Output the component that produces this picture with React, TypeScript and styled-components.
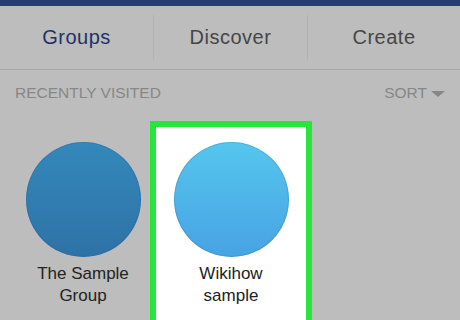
import React from 'react';
import styled, { createGlobalStyle } from 'styled-components';

const GlobalStyle = createGlobalStyle`
  html, body {
    margin: 0;
    padding: 0;
    background: #bdbdbd;
  }
  body {
    font-family: 'Liberation Sans', Arial, sans-serif;
  }
`;

const Screen = styled.div`
  width: 460px;
  height: 320px;
  overflow: hidden;
  background: #bdbdbd;
  display: flex;
  flex-direction: column;

  & > * {
    flex-shrink: 0;
  }
`;

const TopBar = styled.div`
  height: 6px;
  background: #263e70;
`;

const Tabs = styled.div`
  height: 63px;
  display: grid;
  grid-template-columns: 153px 154px 153px;
  align-items: center;
  border-bottom: 1px solid #a9a9a9;
`;

const Tab = styled.div<{ $active?: boolean; $divider?: boolean }>`
  height: 45px;
  display: flex;
  align-items: center;
  justify-content: center;
  font-size: 20px;
  letter-spacing: 0.5px;
  color: ${p => (p.$active ? '#1f3266' : '#464646')};
  border-left: ${p => (p.$divider ? '1px solid #b2b2b2' : 'none')};
`;

const SectionHeader = styled.div`
  height: 46px;
  display: flex;
  align-items: center;
  justify-content: space-between;
  padding: 0 15px 0 15px;
  color: #878787;
  font-size: 15.5px;
`;

const Sort = styled.div`
  display: flex;
  align-items: center;
  gap: 4px;
`;

const Caret = styled.span`
  width: 0;
  height: 0;
  border-left: 7px solid transparent;
  border-right: 7px solid transparent;
  border-top: 6px solid #878787;
  margin-top: 1px;
`;

const Groups = styled.div`
  display: flex;
  padding: 12px 0 0 9px;
`;

const Card = styled.div<{ $highlight?: boolean }>`
  width: 148px;
  height: 200px;
  display: flex;
  flex-direction: column;
  align-items: center;
  padding-top: 14px;
  box-sizing: border-box;
  background: ${p => (p.$highlight ? '#ffffff' : 'transparent')};
  box-shadow: ${p =>
    p.$highlight ? '0 0 0 1px #ffffff, 0 0 0 7px #26e63c' : 'none'};
`;

const Avatar = styled.div<{ $top: string; $bottom: string }>`
  width: 115px;
  height: 115px;
  border-radius: 50%;
  background: linear-gradient(${p => p.$top}, ${p => p.$bottom});
  box-shadow: inset 0 0 0 1px rgba(20, 60, 100, 0.15);
`;

const Name = styled.div`
  margin-top: 6px;
  font-size: 17px;
  line-height: 22px;
  text-align: center;
  color: #222;
  width: 120px;
`;

export default function App() {
  return (
    <>
      <GlobalStyle />
      <Screen>
        <TopBar />
        <Tabs>
          <Tab $active>Groups</Tab>
          <Tab $divider>Discover</Tab>
          <Tab $divider>Create</Tab>
        </Tabs>
        <SectionHeader>
          <span>RECENTLY VISITED</span>
          <Sort>
            SORT <Caret />
          </Sort>
        </SectionHeader>
        <Groups>
          <Card>
            <Avatar $top="#3488bb" $bottom="#2e72a7" />
            <Name>The Sample Group</Name>
          </Card>
          <Card $highlight>
            <Avatar $top="#55c6ee" $bottom="#47a3e3" />
            <Name>Wikihow sample</Name>
          </Card>
        </Groups>
      </Screen>
    </>
  );
}
